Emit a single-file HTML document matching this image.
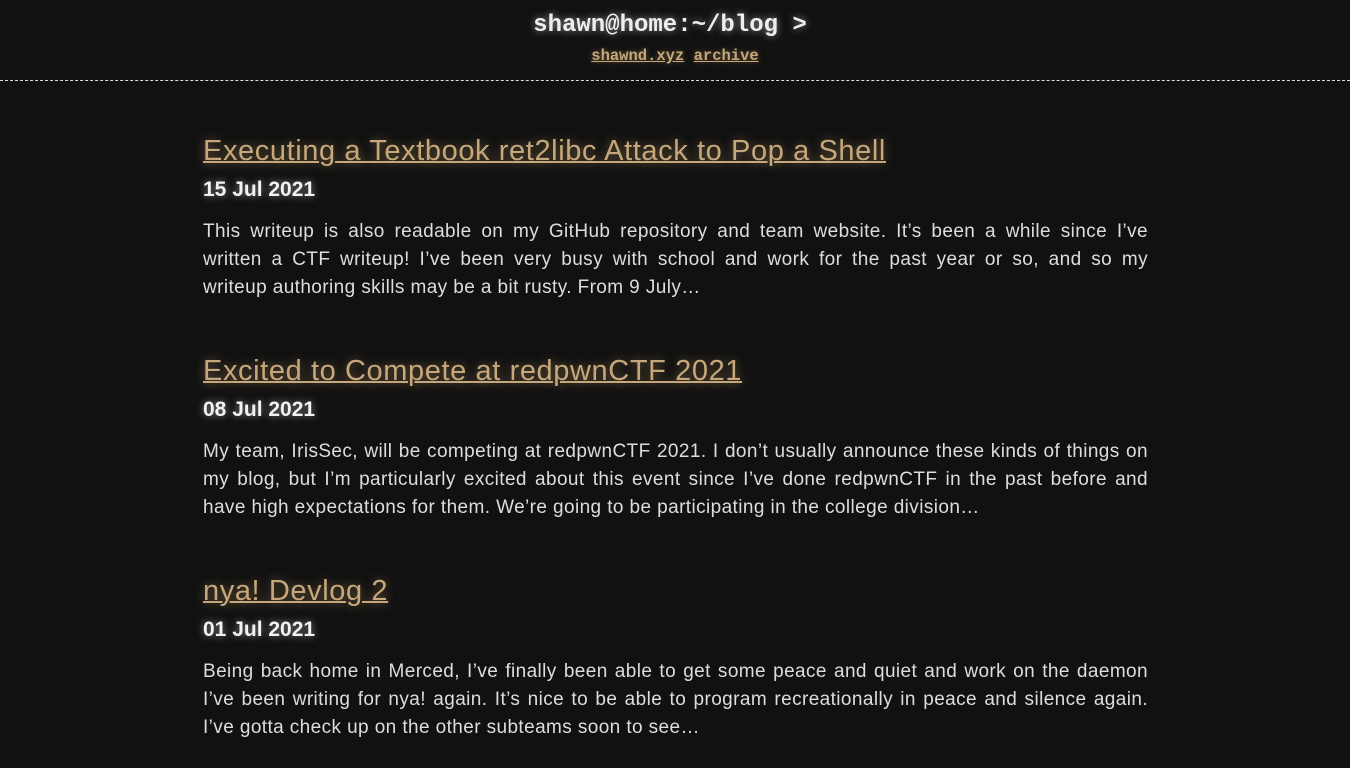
<!DOCTYPE html>
<html><head><meta charset="utf-8"><style>
body{margin:0;background:#111;color:#ddd;font-family:"Liberation Sans",sans-serif;width:1350px;height:768px;overflow:hidden}
header{text-align:center;border-bottom:1px dashed #ddd;height:81px;box-sizing:border-box}
.h1{font-family:"Liberation Mono",monospace;font-weight:bold;font-size:24px;color:#eee;padding-top:13px;padding-right:10px;line-height:26px;text-shadow:0 0 8px rgba(255,255,255,.55)}
.nav{font-family:"Liberation Mono",monospace;font-weight:bold;font-size:15.5px;margin-top:8px}
.nav a{color:#c5a77b;text-decoration:underline;text-shadow:0 0 6px rgba(200,160,100,.5)}
main{position:absolute;left:203px;width:945px;top:0}
.post{position:absolute;left:0;width:945px}
.t{font-size:29px;letter-spacing:0.6px;color:#c5a77b;text-decoration:underline;text-decoration-thickness:2px;text-shadow:0 0 10px rgba(200,160,100,.55);line-height:34px;white-space:nowrap}
.d{font-size:21px;font-weight:bold;color:#f2f2f2;margin-top:9px;line-height:26px;text-shadow:0 0 8px rgba(255,255,255,.5)}
.p{font-size:19px;letter-spacing:0.4px;line-height:28px;margin-top:15px;color:#ddd}
.p span{display:block;text-align:justify;text-align-last:justify}
.p span.l{text-align-last:left}
</style></head><body>
<header><div class="h1">shawn@home:~/blog &gt;</div><div class="nav"><a>shawnd.xyz</a> <a>archive</a></div></header>
<main>
<div class="post" style="top:134px"><div class="t">Executing a Textbook ret2libc Attack to Pop a Shell</div><div class="d">15 Jul 2021</div><div class="p"><span>This writeup is also readable on my GitHub repository and team website. It’s been a while since I’ve</span><span>written a CTF writeup! I’ve been very busy with school and work for the past year or so, and so my</span><span class="l">writeup authoring skills may be a bit rusty. From 9 July…</span></div></div>
<div class="post" style="top:354px"><div class="t">Excited to Compete at redpwnCTF 2021</div><div class="d">08 Jul 2021</div><div class="p"><span>My team, IrisSec, will be competing at redpwnCTF 2021. I don’t usually announce these kinds of things on</span><span>my blog, but I’m particularly excited about this event since I’ve done redpwnCTF in the past before and</span><span class="l">have high expectations for them. We’re going to be participating in the college division…</span></div></div>
<div class="post" style="top:574px"><div class="t">nya! Devlog 2</div><div class="d">01 Jul 2021</div><div class="p"><span>Being back home in Merced, I’ve finally been able to get some peace and quiet and work on the daemon</span><span>I’ve been writing for nya! again. It’s nice to be able to program recreationally in peace and silence again.</span><span class="l">I’ve gotta check up on the other subteams soon to see…</span></div></div>
</main>
</body></html>
